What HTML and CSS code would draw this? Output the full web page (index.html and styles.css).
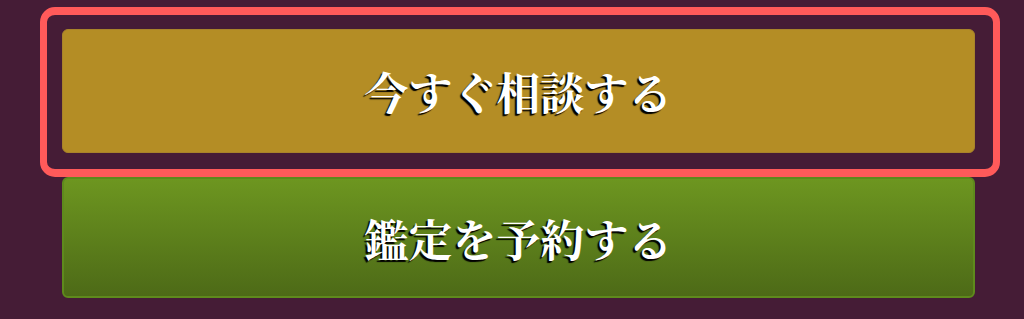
FILE: index.html
```html
<!DOCTYPE html>
<html lang="ja">
<head>
<meta charset="utf-8">
<link rel="stylesheet" href="styles.css">
</head>
<body>
<div class="page">
  <div class="focus-ring">
    <a class="btn btn-gold" href="#">今すぐ相談する</a>
  </div>
  <a class="btn btn-green" href="#">鑑定を予約する</a>
</div>
</body>
</html>
```

FILE: styles.css
```css
html, body {
  margin: 0;
  padding: 0;
  background: #451c36;
  width: 1024px;
  height: 319px;
  overflow: hidden;
}
.page {
  display: flex;
  flex-direction: column;
  padding-top: 7px;
}
.focus-ring {
  margin-left: 40px;
  width: 960px;
  box-sizing: border-box;
  border: 8px solid #ff5a5a;
  border-left-width: 7px;
  border-right-width: 7px;
  border-radius: 15px;
  padding: 14px 18px 16px 15px;
}
.btn {
  display: flex;
  align-items: center;
  justify-content: center;
  box-sizing: border-box;
  width: 913px;
  border-radius: 6px;
  color: #fff;
  text-decoration: none;
  font-family: "Noto Serif CJK JP", "Noto Sans CJK JP", serif;
  font-weight: 700;
  font-size: 44px;
  line-height: 1;
  text-shadow: -2px 2px 1px #000;
}
.btn-gold {
  height: 124px;
  background: #b48d25;
  border: 1px solid #a8832a;
}
.btn-green {
  margin-left: 62px;
  height: 121px;
  background: linear-gradient(#6d9620, #4d6a17);
  border: 2px solid #5e8a1c;
}
```
